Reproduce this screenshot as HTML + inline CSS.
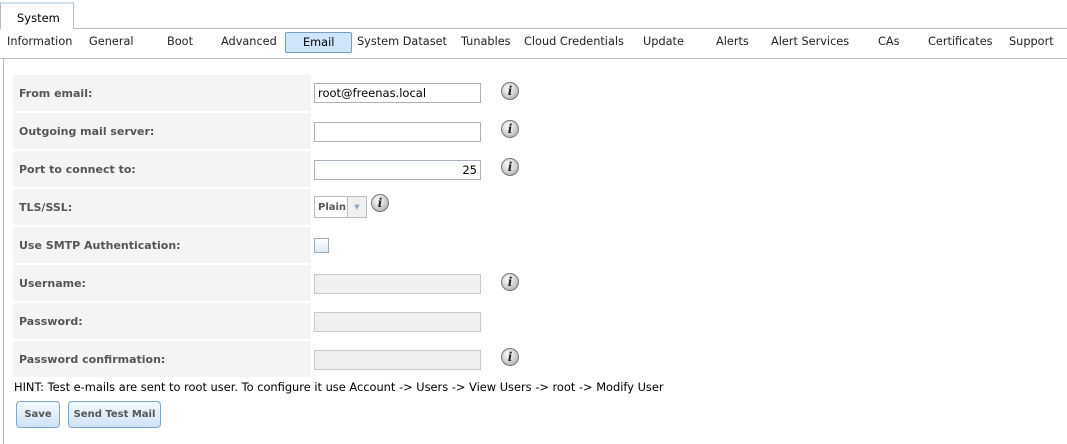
<!DOCTYPE html>
<html><head><style>
*{margin:0;padding:0;box-sizing:border-box}
body{width:1067px;height:444px;background:#fff;font-family:"DejaVu Sans","Liberation Sans",sans-serif;position:relative;overflow:hidden;color:#000}
.a{position:absolute}
.tab{left:0;top:2px;width:74px;height:27px;border:1px solid #b5bcc7;border-bottom:none;border-top:2px solid #cfe0f2;background:#fff;font-size:11.5px;padding:7px 0 0 16px}
.line1{left:73px;top:28px;width:994px;height:1px;background:#b5bcc7}
.st{top:35px;font-size:11.3px;color:#222}
.email{left:285px;top:32px;width:67px;height:21px;border:1px solid #769dc0;background:#cfe5fa;border-radius:2px;font-size:11.3px;padding:3px 0 0 17px}
.line2{left:0;top:58px;width:1067px;height:1px;background:#b5bcc7}
.vl{left:3px;top:58px;width:1px;height:386px;background:#b5bcc7}
.row{left:13px;width:298px;height:36px;background:#f4f4f4;font-size:11px;font-weight:bold;color:#555;padding:12px 0 0 6px}
.in{left:314px;width:167px;height:20px;border:1px solid #a8b3bf;background:#fff;font-size:11.5px;padding:2px 3px}
.dis{background:#f0f0f0;border-color:#c8c8c8}
.info{left:501px;width:18px;height:18px;border-radius:50%;background:radial-gradient(circle at 40% 35%,#fff,#c8c8c8 60%,#999);border:1px solid #777;font:italic bold 12px "DejaVu Serif",serif;text-align:center;line-height:16px;color:#222}
.btn{top:401px;height:27px;border:1px solid #7fa6cc;border-radius:4px;background:linear-gradient(#f4f9fe,#cfe2f6);font-size:10px;font-weight:bold;color:#555;text-align:center;line-height:25px}
</style></head><body>
<div class="a tab">System</div>
<div class="a line1"></div>
<div class="a st" style="left:7px">Information</div>
<div class="a st" style="left:89px">General</div>
<div class="a st" style="left:167px">Boot</div>
<div class="a st" style="left:221px">Advanced</div>
<div class="a email">Email</div>
<div class="a st" style="left:357px">System Dataset</div>
<div class="a st" style="left:461px">Tunables</div>
<div class="a st" style="left:524px">Cloud Credentials</div>
<div class="a st" style="left:643px">Update</div>
<div class="a st" style="left:716px">Alerts</div>
<div class="a st" style="left:771px">Alert Services</div>
<div class="a st" style="left:878px">CAs</div>
<div class="a st" style="left:928px">Certificates</div>
<div class="a st" style="left:1009px">Support</div>
<div class="a line2"></div>
<div class="a vl"></div>

<div class="a row" style="top:75px">From email:</div>
<div class="a row" style="top:113px">Outgoing mail server:</div>
<div class="a row" style="top:151px">Port to connect to:</div>
<div class="a row" style="top:189px">TLS/SSL:</div>
<div class="a row" style="top:227px">Use SMTP Authentication:</div>
<div class="a row" style="top:265px">Username:</div>
<div class="a row" style="top:303px">Password:</div>
<div class="a row" style="top:341px">Password confirmation:</div>

<div class="a in" style="top:83px">root@freenas.local</div>
<div class="a in" style="top:122px"></div>
<div class="a in" style="top:160px;text-align:right">25</div>
<div class="a" style="left:314px;top:196px;width:53px;height:22px;border:1px solid #b5bcc7;background:#fff;font-size:10px;font-weight:bold;color:#555;padding:5px 0 0 3px">Plain<div class="a" style="left:32px;top:0;width:19px;height:20px;border-left:1px solid #b5bcc7;background:#f0f0f0;color:#8aa8cc;font-size:7px;text-align:center;line-height:20px">▼</div></div>
<div class="a" style="left:314px;top:238px;width:15px;height:15px;border:1px solid #9aaabb;background:linear-gradient(#fff,#dde8f4)"></div>
<div class="a in dis" style="top:274px"></div>
<div class="a in dis" style="top:312px"></div>
<div class="a in dis" style="top:350px"></div>

<div class="a info" style="top:82px">i</div>
<div class="a info" style="top:120px">i</div>
<div class="a info" style="top:158px">i</div>
<div class="a info" style="left:371px;top:194px">i</div>
<div class="a info" style="top:273px">i</div>
<div class="a info" style="top:348px">i</div>

<div class="a" style="left:14px;top:380px;font-size:11.4px">HINT: Test e-mails are sent to root user. To configure it use Account -&gt; Users -&gt; View Users -&gt; root -&gt; Modify User</div>
<div class="a btn" style="left:16px;width:44px">Save</div>
<div class="a btn" style="left:68px;width:93px">Send Test Mail</div>
</body></html>
